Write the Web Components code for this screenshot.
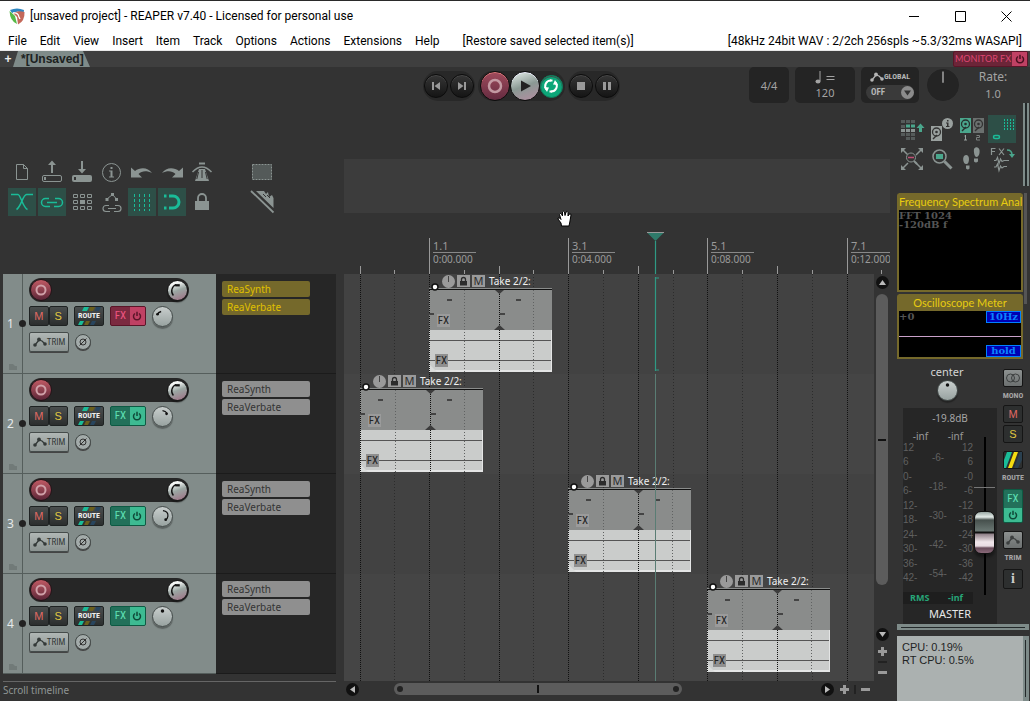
<!DOCTYPE html>
<html lang="en">
<head>
<meta charset="utf-8">
<title>[unsaved project] - REAPER v7.40</title>
<style>
  html, body { margin: 0; min-height: 100vh; background: #333; }
  body { font-family: Roboto, "Noto Sans", sans-serif; font-size: 12px; }
</style>
</head>
<body>
<daw-app></daw-app>
<script>
const BASE = `<style>
  *{box-sizing:border-box}
  :host([hidden]){display:none}
  button,input,select{font:inherit;color:inherit;border:0;padding:0;margin:0;background:none;min-width:0;outline:0}
  button{white-space:nowrap}
  svg{display:block}
</style>`;

function define(name, render) {
  customElements.define(name, class extends HTMLElement {
    connectedCallback() {
      if (this.shadowRoot) return;
      const t = document.createElement('template');
      t.innerHTML = BASE + render(this);
      this.attachShadow({ mode: 'open' }).appendChild(t.content.cloneNode(true));
    }
  });
}

/* ---------- icons, all on a 28 x 28 board ---------- */
const drive = (x, y, c, d) => `<rect x="${x}" y="${y}" width="11" height="15" fill="${c}"/><circle cx="${x + 5.5}" cy="${y + 6}" r="4" fill="none" stroke="${d}" stroke-width="1.3"/><circle cx="${x + 5.5}" cy="${y + 6}" r="1.3" fill="${d}"/><path d="M${x + 2} ${y + 13}L${x + 6} ${y + 9}" stroke="${d}" stroke-width="1.5"/>`;
const ICONS = {
  file: `<path d="M8.500 6.500H15.500L19.500 10.500V21.500H8.500ZM15.500 6.500V10.500H19.500" fill="none" stroke="currentColor"/>`,
  open: `<path d="M13 15V7H10L14 2.500L18 7H15V15Z" fill="currentColor"/><rect x="4.500" y="17.500" width="19" height="6" rx="1.500" fill="none" stroke="currentColor"/><path d="M6 19h2v3H6z" fill="currentColor"/>`,
  save: `<path d="M13 3V11H10L14 15.500L18 11H15V3Z" fill="currentColor"/><rect x="4" y="17" width="20" height="7" rx="2" fill="currentColor"/><path d="M6 19h2v3H6z" fill="#333"/>`,
  info: `<circle cx="13.500" cy="14.500" r="9" fill="none" stroke="currentColor"/><path d="M12.500 9h2v2h-2zM11 12.500h3.500V18.500H16V19.500H11V18.500H12.500V13.500H11z" fill="currentColor"/>`,
  undo: `<path d="M3 9.500L7 13C12 9 20 9 24 15C19 12.500 14 12.500 10.500 16L14 19.500H3Z" fill="currentColor"/>`,
  redo: `<path d="M25 9.500L21 13C16 9 8 9 4 15C9 12.500 14 12.500 17.500 16L14 19.500H25Z" fill="currentColor"/>`,
  metro: `<path d="M11 5.500h6" stroke="currentColor" stroke-width="2"/><path d="M4.500 14Q14 4 23.500 14" fill="none" stroke="currentColor" stroke-width="1.500"/><path d="M11 11H17L21 23H7Z" fill="currentColor"/><path d="M14 12V20M10.500 14L8.800 21M17.500 14L19.200 21" stroke="#333"/>`,
  marquee: `<rect x="4.500" y="6.500" width="19" height="15" fill="#545a59" stroke="currentColor" stroke-dasharray="2 1"/>`,
  cross: `<path d="M3 6.500H10C12.500 6.500 15 20 19.500 21.500M25 6.500H18.500C15 6.500 13 19 8.500 21.500" fill="none" stroke="currentColor" stroke-width="1.500"/>`,
  link: `<path d="M11 10.500H7.500A4 4 0 0 0 7.500 18.500H12M17 10.500H20.500A4 4 0 0 1 20.500 18.500H16M9 14.500H19" fill="none" stroke="currentColor" stroke-width="1.500"/>`,
  matrix: `<path d="M5.500 6.500h4v3h-4zM12.500 6.500h4v3h-4zM19.500 6.500h4v3h-4zM5.500 12.500h4v3h-4zM19.500 12.500h4v3h-4zM5.500 18.500h4v3h-4zM12.500 18.500h4v3h-4zM19.500 18.500h4v3h-4z" fill="none" stroke="currentColor"/><path d="M12 12h5v4h-5z" fill="currentColor"/>`,
  envlink: `<path d="M9 11L14.500 6.500L18.500 11" fill="none" stroke="currentColor"/><path d="M7.500 10h3v3h-3zM13 5h3v3h-3zM17 10h3v3h-3z" fill="currentColor"/><path d="M11 17.500H8A3 3 0 0 0 8 23.500H12M17 17.500H20A3 3 0 0 1 20 23.500H16M10 20.500H18" fill="none" stroke="currentColor" stroke-width="1.200"/>`,
  gridlines: `<path d="M6.500 6V23M11.500 6V23M16.500 6V23M21.500 6V23" stroke="currentColor" stroke-dasharray="3 2"/>`,
  magnet: `<path d="M11 8H15A6 6 0 0 1 15 20H11" fill="none" stroke="currentColor" stroke-width="3"/><path d="M6 6.500h2.500v3H6zM6 18.500h2.500v3H6z" fill="currentColor"/>`,
  lock: `<path d="M7 13H21V22H7Z" fill="currentColor"/><path d="M10 13V10A4 4 0 0 1 18 10V13" fill="none" stroke="currentColor" stroke-width="1.800"/>`,
  ruler: `<path d="M3 3L25.500 24.500" stroke="currentColor" stroke-width="1.800"/><path d="M8 3H16L18 6L20 4L21 9L24 7L25.500 10V20Z" fill="currentColor"/><path d="M15 6L18 9M19 7L22 10" stroke="#333"/>`,
  mixgrid: `<path d="M3 5h4v3H3zM8 5h4v3H8zM13 5h4v3h-4zM3 10h4v3H3zM3 18h4v3H3zM8 18h4v3H8zM13 18h4v3h-4zM8 22h4v3H8zM13 22h4v3h-4z" fill="#555b5a"/><path d="M3 14h4v3H3zM8 14h4v3H8zM13 14h4v3h-4z" fill="currentColor"/><path d="M8 9.500h4v3H8zM13 9.500h4v3h-4zM21 17V13H18.500L22.500 8.500L26.500 13H24V17Z" fill="#4aa68c"/>`,
  driveinfo: `${drive(3, 11, '#9aa19f', '#333')}<circle cx="19.500" cy="8.500" r="5.500" fill="#9aa19f"/><path d="M19 5h1.500v1.500H19zM18 7.500h2.500V11H21.500V12H18V11H19V8.500H18z" fill="#333"/>`,
  drives: `${drive(2, 3, '#4aa68c', '#26302d')}${drive(15, 3, '#6b706f', '#333')}<path d="M7.500 20V25M6 25h3M6.500 21h1" stroke="#9aa19f"/><path d="M18.500 20.500h3v2h-3v2.500h3.500" fill="none" stroke="#7b807f"/>`,
  gridoval: `<path d="M16.500 4V15M19.500 4V15M22.500 4V15M25.500 4V15" stroke="#1abc98" stroke-dasharray="2 1"/><rect x="5.500" y="20.500" width="6" height="3" rx="1.500" fill="none" stroke="#1abc98" stroke-width="1.500"/>`,
  zoomfit: `<path d="M4 4L10 10M24 4L18 10M4 24L10 18M24 24L18 18" stroke="currentColor" stroke-width="1.500"/><path d="M3 3h5L3 8zM25 3h-5l5 5zM3 25h5l-5-5zM25 25h-5l5-5z" fill="currentColor"/><circle cx="13" cy="12.500" r="4.500" fill="#333" stroke="currentColor"/><path d="M16 16l3 3" stroke="currentColor" stroke-width="2"/><path d="M10 12.500h6" stroke="#c05075" stroke-width="1.500"/>`,
  zoomsel: `<circle cx="11.500" cy="11.500" r="6.500" fill="none" stroke="currentColor" stroke-width="1.500"/><path d="M16.500 16.500L23.500 23.500" stroke="currentColor" stroke-width="3"/><rect x="8" y="9" width="7" height="5" fill="#4aa68c"/>`,
  feet: `<path d="M6 11c2-2 5-1 5 3c0 3-1 5-2.500 5C6 20 4 14 6 11zM8 20.500h3.500v3q-1.500 2-3.500 0zM16 4c1.500-3 5-2 5.500 1c.5 4-1 7-3 7s-3-5-2.500-8zM16 13.500h4v3q-2 2-4 0z" fill="currentColor"/>`,
  fxwave: `<path d="M3.500 10V3.500H7.500M3.500 6.500H7M11 3.500L16 10M16 3.500L11 10" fill="none" stroke="currentColor" stroke-width="1.200"/><path d="M19 5Q24 5 24 10" fill="none" stroke="#4aa68c" stroke-width="1.500"/><path d="M21 9h6l-3 4z" fill="#4aa68c"/><path d="M6 15.500H8L9.500 12.500L11 18.500L12.500 14L14 16.500L16 15.500H21M6 22H8L9.500 19L11 25.500L12.500 21L14 23L16 21.500H19" fill="none" stroke="currentColor" stroke-width="1.200"/>`
};
define('daw-icon', el => `
<style>:host{display:block;width:28px;height:28px}</style>
<svg width="28" height="28" viewBox="0 0 28 28" aria-hidden="true">${ICONS[el.getAttribute('name')] || ''}</svg>`);

define('tool-button', el => `
<style>
  :host{display:block;width:28px;height:28px;color:#8b9492}
  :host([on]) button{background:#2d4f47;color:#1abc98}
  button{display:block;width:28px;height:28px}
</style>
<button type="button" aria-label="${el.getAttribute('label')}"><daw-icon name="${el.getAttribute('icon')}"></daw-icon></button>`);

const power = s => `<svg width="${s}" height="${s}" viewBox="0 0 10 10" aria-hidden="true"><path d="M3 2.500A3.500 3.500 0 1 0 7 2.500M5 .8V5" fill="none" stroke="currentColor" stroke-width="1.500"/></svg>`;
const envelope = `<svg width="14" height="10" viewBox="0 0 14 10" aria-hidden="true"><path d="M2 8L6 3L9 4L12 7" fill="none" stroke="currentColor" stroke-width="1.300"/><circle cx="2" cy="8" r="1.800" fill="currentColor"/><circle cx="6" cy="2.500" r="1.900" fill="currentColor"/><circle cx="12" cy="7" r="1.800" fill="currentColor"/></svg>`;

/* ---------- rotary knob: a range input stacked over its face ---------- */
define('daw-knob', el => {
  const kind = el.getAttribute('kind');
  const marks = {
    volume: `<path d="M6 16A7.500 7.500 0 0 1 9 4" fill="none" stroke="#111" stroke-width="1.500"/><path d="M8 3.500h5v2.500H8z" fill="#111"/>`,
    left: `<path d="M4.500 8.500Q6 5.500 9 5" fill="none" stroke="#111" stroke-width="1.800"/><circle cx="5" cy="8" r="1.500" fill="#111"/>`,
    topright: `<path d="M10.500 4Q14 4.500 15.500 7" fill="none" stroke="#111" stroke-width="1.200"/><circle cx="15" cy="7.500" r="1.500" fill="#111"/>`,
    right: `<path d="M11 4Q17 5 16.500 10Q16 13 14 14.500" fill="none" stroke="#111" stroke-width="1.300"/><circle cx="14" cy="14" r="1.500" fill="#111"/>`,
    center: `<circle cx="10.500" cy="4.500" r="1.900" fill="#111"/>`,
    rate: `<path d="M10.500 1V9" stroke="#aaa"/>`
  };
  return `
<style>
  :host{display:grid;width:21px;height:21px;flex:none}
  .face,input{grid-area:1/1;width:100%;height:100%}
  .face{border-radius:50%;background:linear-gradient(#c8cecd,#98a2a0);border:1px solid #444b4a;box-shadow:0 2px 1px rgba(0,0,0,.3)}
  :host([kind=volume]) .face{background:linear-gradient(160deg,#f4f6f5 20%,#9aa6a2 50%,#a06f85);border-color:#161616}
  :host([kind=rate]){width:32px;height:32px}
  :host([kind=rate]) .face{background:#242424;border-color:#242424;box-shadow:none}
  svg{width:100%;height:100%}
  input{appearance:none;opacity:0}
</style>
<div class="face"><svg viewBox="0 0 21 21" aria-hidden="true">${marks[kind]}</svg></div>
<input type="range" aria-label="${el.getAttribute('label')}">`;
});

/* ---------- window title ---------- */
define('title-bar', () => `
<style>
  :host{display:flex;align-items:center;height:31px;background:#fff;color:#000;border-top:1px solid #2a2a2a;padding:0 1px 0 9px}
  .t{margin-left:5px;flex:1;white-space:nowrap}
  button{width:46px;height:30px;display:grid;place-items:center}
</style>
<svg width="16" height="17" viewBox="0 0 16 17" aria-hidden="true"><path d="M1 2Q8-1 15 2L14.500 6L9 3.500L3 5Z" fill="#2e86c1"/><path d="M.5 3Q2 4 6 8L8 16Q1 13 .5 3Z" fill="#57b947"/><path d="M15.500 4Q16 13 9 16.500L8 9L4 5Q9 2 15.500 4Z" fill="#c4685a"/><path d="M4 5Q9 4 10 9L11 11" fill="none" stroke="#fff" stroke-width="1.300"/></svg>
<div class="t">[unsaved project] - REAPER v7.40 - Licensed for personal use</div>
<button type="button" aria-label="Minimize"><svg width="11" height="11"><path d="M0 5.500h10" stroke="#000"/></svg></button>
<button type="button" aria-label="Maximize"><svg width="11" height="11"><path d="M.5.5h10v10H.5z" fill="none" stroke="#000"/></svg></button>
<button type="button" aria-label="Close"><svg width="11" height="11"><path d="M.5.5l10 10M10.500.5l-10 10" stroke="#000"/></svg></button>`);

define('menu-bar', () => `
<style>
  :host{display:flex;align-items:center;height:20px;background:#fff;color:#000;padding:0 8px;border-bottom:1px solid #e8e8e8;white-space:nowrap}
  nav{display:flex;gap:13px;flex:1}
  nav button:last-child{margin-left:10px}
</style>
<nav>${['File', 'Edit', 'View', 'Insert', 'Item', 'Track', 'Options', 'Actions', 'Extensions', 'Help', '[Restore saved selected item(s)]'].map(m => `<button type="button">${m}</button>`).join('')}</nav>
<span>[48kHz 24bit WAV : 2/2ch 256spls ~5.3/32ms WASAPI]</span>`);

define('project-tabs', () => `
<style>
  :host{display:flex;align-items:stretch;height:16px;background:#3f3f3f;padding-left:3px;padding-right:2px}
  .add{width:10px;color:#eee;font:bold 12px/15px "Liberation Sans",sans-serif}
  .tab{width:77px;padding-left:8px;text-align:left;background:#7f8b89;color:#1c2221;font:bold 12px/16px "Liberation Sans",sans-serif;clip-path:polygon(5px 0,70px 0,77px 100%,0 100%)}
  .mon{margin-left:auto;display:flex;border:1px solid #5a1528;border-radius:2px;background:#6c2538}
  .mon button{font:9px/14px Lato,sans-serif;color:#df4672;width:58px}
  .mon .p{background:#c04164;color:#4a1020;width:15px;display:grid;place-items:center}
</style>
<button class="add" type="button" aria-label="New project tab">+</button>
<button class="tab" type="button">*[Unsaved]</button>
<div class="mon"><button type="button">MONITOR FX</button><button type="button" class="p" aria-label="Monitor FX power">${power(10)}</button></div>`);

/* ---------- transport ---------- */
define('transport-bar', () => `
<style>
  :host{display:grid;grid-template-columns:1fr auto 1fr;align-items:center;height:36px;padding-left:12px;color:#a3a3a3}
  .play,.pod,.right{display:flex;align-items:center}
  .play{grid-column:2;gap:3px;padding-top:2px}
  .pod{height:30px;border-radius:15px;background:#282828;padding:0 1px;gap:2px}
  .pod.wide{gap:0;padding:0 2px}
  .pod button{width:24px;height:24px;border-radius:50%;display:grid;place-items:center;color:#999;background:linear-gradient(#363636,#151515);border:1px solid #0c0c0c;box-shadow:inset 0 1px #484848}
  .pod .big{width:30px;height:30px}
  .pod .rec{background:linear-gradient(#a04b5c,#642b40);box-shadow:inset 0 1px #e07d7d;color:#c49aa3}
  .pod .go{background:linear-gradient(160deg,#d6e0dc 10%,#8a9994 50%,#b58ea2);box-shadow:inset 0 1px #eef;color:#222}
  .pod .loop{background:#0ca678;color:#fff;width:23px;height:23px;border-color:#0f7d5c}
  .right{justify-content:flex-end;gap:6px}
  .box{height:36px;border-radius:5px;background:#242424;font:11px/15px "Noto Sans",sans-serif;text-align:center}
  .sig{width:40px}
  .bpm{width:60px;display:grid;justify-items:center;align-content:center;gap:2px}
  input{width:100%;height:14px;text-align:center}
  .glob{width:58px;padding:3px 5px;display:grid;gap:1px;color:#b5b5b5;font:bold 8px/13px "Roboto Condensed",Roboto,sans-serif}
  .glob span{display:flex;align-items:center;justify-content:center}
  .sel{display:grid;align-items:center;background:#3a3a3a;border-radius:8px}
  .sel>*{grid-area:1/1}
  select{appearance:none;width:100%;height:15px;padding-left:5px;font-size:9px}
  .sel svg{justify-self:end;pointer-events:none}
  .rate{width:54px;font:12px/17px "Noto Sans",sans-serif;text-align:center;margin-right:10px}
  .rate input{height:17px;font-size:11px}
  daw-knob{margin:0 1px 0 2px}
</style>
<div class="play">
  <div class="pod">
    <button type="button" aria-label="Go to start"><svg width="10" height="10"><path d="M1 1v8h2V1zM9 1v8L3.500 5z" fill="currentColor"/></svg></button>
    <button type="button" aria-label="Go to end"><svg width="10" height="10"><path d="M9 1v8H7V1zM1 1v8L6.500 5z" fill="currentColor"/></svg></button>
  </div>
  <div class="pod wide">
    <button type="button" class="big rec" aria-label="Record"><svg width="16" height="16"><circle cx="8" cy="8" r="6" fill="none" stroke="currentColor" stroke-width="2.500"/></svg></button>
    <button type="button" class="big go" aria-label="Play"><svg width="14" height="14"><path d="M3 1.500v11L13 7z" fill="currentColor"/></svg></button>
    <button type="button" class="loop" aria-label="Repeat"><svg width="16" height="16"><path d="M8 2.500A5.500 5.500 0 0 0 3.500 11.500M8 13.500A5.500 5.500 0 0 0 12.500 4.500" fill="none" stroke="currentColor" stroke-width="2"/><path d="M1 9l5 .5L4 14zM15 7l-5-.5L12 2z" fill="currentColor"/><path d="M7 2.500h2.500M6.500 13.500H9" stroke="currentColor" stroke-width="2"/></svg></button>
  </div>
  <div class="pod">
    <button type="button" aria-label="Stop"><svg width="8" height="8"><path d="M0 0h8v8H0z" fill="currentColor"/></svg></button>
    <button type="button" aria-label="Pause"><svg width="8" height="8"><path d="M0 0h3v8H0zM5 0h3v8H5z" fill="currentColor"/></svg></button>
  </div>
</div>
<div class="right">
  <button type="button" class="box sig">4/4</button>
  <div class="box bpm"><svg width="20" height="13" aria-hidden="true"><ellipse cx="3" cy="10.500" rx="2.500" ry="2" fill="currentColor"/><path d="M5 0v10M11.500 5.500h8M11.500 8.500h8" stroke="currentColor"/></svg><input type="text" value="120" aria-label="Tempo"></div>
  <div class="box glob"><span>${envelope}GLOBAL</span>
    <div class="sel"><select aria-label="Global automation override"><option>OFF</option></select><svg width="13" height="13"><circle cx="6.500" cy="6.500" r="6.500" fill="#8c8c8c"/><path d="M3 4.500h7l-3.500 5z" fill="#333"/></svg></div></div>
  <daw-knob kind="rate" label="Playback rate"></daw-knob>
  <label class="rate">Rate:<input type="text" value="1.0"></label>
</div>`);

/* ---------- track control panel ---------- */
define('fx-toggle', el => `
<style>
  :host{display:flex;width:36px;height:20px;border:1px solid #0d5a43;border-radius:2px;overflow:hidden;background:#23705a;color:#5fe0b4;font:11px/18px "Roboto Condensed",Roboto,sans-serif}
  button{flex:20 1 0}
  .p{flex:16 1 0;background:#3dbb92;color:#0f4a38;display:grid;place-items:center}
  :host([tone=pink]){border-color:#5a1528;background:#7b2a40;color:#ef5580}
  :host([tone=pink]) .p{background:#c04164;color:#5a1528}
  :host([upright]){flex-direction:column;width:20px;height:34px}
</style>
<button type="button">FX</button><button type="button" class="p" aria-label="FX power">${power(10)}</button>`);

define('track-row', el => {
  const n = el.getAttribute('number'), tone = el.getAttribute('tone') || '';
  return `
<style>
  :host{display:grid;grid-template-columns:213px 1fr;height:100px}
  .tcp{display:grid;grid-template-columns:20px 1fr;background:#828c8a;border-bottom:1px solid #555e5c}
  .side{display:grid;grid-template-rows:1fr auto 1fr;border-right:1px solid #555e5c;color:#e6eaea;font:12px/14px "Noto Sans",sans-serif}
  .num{grid-row:2;display:flex;align-items:center;justify-content:space-between;padding-left:4px;margin-right:-4px}
  .num i{width:7px;height:7px;border-radius:50%;background:#222;position:relative}
  .side svg{grid-row:3;align-self:end;margin:0 0 3px 6px}
  .ctl{display:grid;grid-template-rows:24px 20px 22px;row-gap:4px;padding:4px 0 0 6px;align-content:start}
  .row{display:flex;align-items:center;gap:6px}
  .name{width:160px;height:24px;border-radius:12px;background:#262626;justify-content:space-between;padding:0 1px;gap:0}
  .name input{flex:1;color:#ddd}
  .rec{width:22px;height:22px;border-radius:50%;border:1px solid #241418;background:linear-gradient(#c05a64,#5c2638);color:#cfa0a8;display:grid;place-items:center}
  .b{height:20px;border:1px solid #1e2222;border-radius:2px;background:linear-gradient(#4a4e4e,#2b2e2e);font:11px/18px "Liberation Sans",sans-serif}
  .ms{display:flex;width:39px}
  .ms .b{flex:1}
  .route{width:30px;color:#eee;font:bold 8px/18px "Roboto Condensed",Roboto,sans-serif;display:grid}
  .route svg,.route span{grid-area:1/1}
  .trim{width:40px;height:20px;border:1px solid #454c4b;border-radius:2px;background:linear-gradient(#b0b7b5,#8b9391);color:#333938;display:flex;align-items:center;justify-content:center;box-shadow:0 1px #444;font:9px/18px "Roboto Condensed",Roboto,sans-serif}
  .third{padding-top:2px}
  .ph{width:16px;height:16px;border-radius:50%;border:1px solid #454c4b;background:#a3abaa;display:grid;place-items:center;color:#333;box-shadow:0 1px #444;}
  .ins{background:#262626;border-bottom:1px solid #1b1b1b;padding:7px 26px 0 6px;display:grid;gap:2px;align-content:start}
  .ins button{height:16px;border-radius:2px;background:#8f8f8f;color:#333;text-align:left;padding-left:5px;font:10px/16px "Noto Sans",sans-serif}
  .ins.pink button{background:#75692b;color:#e0c000}
</style>
<div class="tcp">
  <div class="side"><div class="num"><span>${n}</span><i></i></div><svg width="8" height="6" aria-hidden="true"><path d="M0 0h4l2 2h2v4H0z" fill="#717a78"/></svg></div>
  <div class="ctl">
    <div class="row name"><button type="button" class="rec" aria-label="Record arm track ${n}"><svg width="12" height="12"><circle cx="6" cy="6" r="4.500" fill="none" stroke="currentColor" stroke-width="2"/></svg></button><input type="text" aria-label="Track ${n} name"><daw-knob kind="volume" label="Volume"></daw-knob></div>
    <div class="row">
      <div class="ms"><button type="button" class="b" style="color:#e06a64">M</button><button type="button" class="b" style="color:#e0c840">S</button></div>
      <button type="button" class="b route"><svg width="28" height="18" aria-hidden="true"><path d="M9 0h5l-2 4H7zM5 14h4l-2 4H3z" fill="#1abc98"/><path d="M15 0h5l-2 4h-4zM11 14h4l-2 4H9z" fill="#6b5f1c"/><path d="M21 0h5l-2 4h-4zM17 14h4l-2 4h-4z" fill="#28455e"/></svg><span>ROUTE</span></button>
      <fx-toggle tone="${tone}"></fx-toggle>
      <daw-knob kind="${el.getAttribute('pan')}" label="Pan"></daw-knob>
    </div>
    <div class="row third"><button type="button" class="trim">${envelope}TRIM</button><button type="button" class="ph" aria-label="Invert phase"><svg width="10" height="10"><circle cx="5" cy="5" r="3" fill="none" stroke="currentColor"/><path d="M1.500 8.500l7-7" stroke="currentColor"/></svg></button></div>
  </div>
</div>
<div class="ins ${tone}"><button type="button">ReaSynth</button><button type="button">ReaVerbate</button></div>`;
});

define('track-panel', () => `
<style>
  :host{display:flex;flex-direction:column;padding:0 8px 0 3px}
  .tools{display:grid;grid-template-columns:repeat(9,28px);gap:2px;padding:55px 0 0 5px;height:171px;align-content:start}
  .tools .r{grid-column:9}
  .status{margin-top:7px;border-top:1px solid #666;color:#8f9594;font:10px/16px "Noto Sans",sans-serif}
</style>
<div class="tools">
  <tool-button icon="file" label="New project"></tool-button><tool-button icon="open" label="Open project"></tool-button><tool-button icon="save" label="Save project"></tool-button><tool-button icon="info" label="Project settings"></tool-button><tool-button icon="undo" label="Undo"></tool-button><tool-button icon="redo" label="Redo"></tool-button><tool-button icon="metro" label="Metronome"></tool-button><tool-button class="r" icon="marquee" label="Marquee"></tool-button>
  <tool-button on icon="cross" label="Auto crossfade"></tool-button><tool-button on icon="link" label="Item grouping"></tool-button><tool-button icon="matrix" label="Ripple editing"></tool-button><tool-button icon="envlink" label="Move envelopes with items"></tool-button><tool-button on icon="gridlines" label="Grid lines"></tool-button><tool-button on icon="magnet" label="Snap"></tool-button><tool-button icon="lock" label="Lock"></tool-button><tool-button class="r" icon="ruler" label="Ruler"></tool-button>
</div>
<track-row number="1" tone="pink" pan="left"></track-row>
<track-row number="2" pan="topright"></track-row>
<track-row number="3" pan="right"></track-row>
<track-row number="4" pan="center"></track-row>
<div class="status">Scroll timeline</div>`);

/* ---------- arrange view ---------- */
define('media-item', () => `
<style>
  :host{display:block;width:123px;color:#f0f0f0}
  .head{display:flex;gap:2px;height:14px;align-items:center;padding-left:13px;white-space:nowrap;font:10px/14px "Noto Sans",sans-serif}
  .head button{width:13px;height:12px;background:#9a9a9a;color:#2c2c2c;display:grid;place-items:center;flex:none;line-height:12px;font-size:11px}
  .head .k{border-radius:50%;height:13px}
  .head span{margin-left:2px}
  .body{display:grid;height:84px}
  .body>*{grid-area:1/1}
  .fx{align-self:start;justify-self:start;margin:26px 0 0 8px;width:13px;height:13px;background:#9b9b9b;color:#222;font:11px/13px "Roboto Condensed",Roboto,sans-serif}
  .fx.two{margin:66px 0 0 6px;background:#8f8f8f}
  svg{overflow:visible}
</style>
<div class="head"><button type="button" class="k" aria-label="Take volume"><svg width="13" height="13"><path d="M6.500 1v6" stroke="#444"/></svg></button><button type="button" aria-label="Lock item"><svg width="9" height="9"><path d="M1 4h7v4.500H1z" fill="currentColor"/><path d="M2.500 4.500V2.500a2 2 0 0 1 4 0V4.500" fill="none" stroke="currentColor" stroke-width="1.300"/></svg></button><button type="button" aria-label="Mute item">M</button><span>Take 2/2:</span></div>
<div class="body">
<svg width="123" height="84" viewBox="0 0 123 84" aria-hidden="true">
  <path d="M0 0h123v42H0z" fill="#8a8c8b"/><path d="M0 42h123v42H0z" fill="#cacccb"/><path d="M0 82h123v2H0zM122 42h1v42h-1z" fill="#e4e5e5"/><path d="M0 76l8 8H0z" fill="#dadcdb"/>
  <path d="M0 52.500h122M0 72.500h122" stroke="#555"/><path d="M0 1.500h123" stroke="#111"/>
  <path d="M.5 2V84M70.500 2V84" stroke="#111" stroke-dasharray="1 1"/><path d="M35.500 2V84M104.500 2V84" stroke="#606262" stroke-dasharray="1 2"/>
  <path d="M18 11h5v2h-5zM87 11h5v2h-5zM0 25h5v2H0zM71 25h5v2h-5z" fill="#444"/>
  <path d="M66 2h9l-4.500 4zM65 42h11l-5.500-5z" fill="#3c3c3c"/>
  <circle cx="6" cy="-1" r="3" fill="#fff" stroke="#111" stroke-width="1.500"/>
</svg>
<button type="button" class="fx">FX</button><button type="button" class="fx two">FX</button>
</div>`);

define('time-ruler', () => {
  const small = [50, 120, 189, 259, 329, 398, 468, 537], mid = [16, 155, 294, 433];
  return `
<style>
  :host{display:grid;grid-template-columns:85px 139px 139px 140px minmax(0,1fr);height:61px;overflow:hidden;color:#9a9a9a;font:11px/13px "Noto Sans",sans-serif}
  .ticks{grid-area:1/1/2/-1}
  div{grid-row:1;margin-top:25px;border-left:1px solid #999;padding-left:3px;min-width:0}
  div:nth-of-type(1){grid-column:2}div:nth-of-type(2){grid-column:3}div:nth-of-type(3){grid-column:4}div:nth-of-type(4){grid-column:5}
  b{display:block;width:43px;font-weight:400;border-bottom:1px solid #888;padding-top:1px}
  span{display:block;font-size:10px;line-height:12px}
</style>
<svg class="ticks" width="546" height="61" aria-hidden="true"><path d="${small.map(x => `M${x}.500 57v4`).join('')}${mid.map(x => `M${x}.500 53v8`).join('')}" stroke="#999"/></svg>
${[['1.1', '0:00.000'], ['3.1', '0:04.000'], ['5.1', '0:08.000'], ['7.1', '0:12.000']].map(([a, b]) => `<div><b>${a}</b><span>${b}</span></div>`).join('')}`;
});

define('scroll-strip', el => {
  const v = el.hasAttribute('vertical');
  return `
<style>
  :host{display:flex;align-items:center;${v ? 'flex-direction:column;width:16px;padding:2px 0' : 'height:16px;padding:0 18px 0 2px'}}
  button{width:13px;height:13px;border-radius:50%;background:#111;color:#bbb;display:grid;place-items:center;flex:none}
  button.z{background:none;color:#9a9a9a}
  .track{flex:1;display:flex;${v ? 'flex-direction:column;padding:5px 0 43px' : 'padding:0 139px 0 35px'}}
  .bar{flex:1;border-radius:6px;background:#5c5c5c;display:flex;align-items:center;${v ? 'width:12px;justify-content:center' : 'height:12px;justify-content:space-between;padding:0 3px'}}
  .bar i{background:#111;${v ? 'width:8px;height:2px' : 'width:2px;height:8px'}}
  .bar .d{width:6px;height:6px;border-radius:50%;background:#222}
  .sep{background:#222;${v ? 'width:9px;height:2px;margin:3px 0' : 'width:2px;height:9px;margin:0 3px'}}
  .gap{flex:none;width:4px;height:4px}
</style>
<button type="button" aria-label="Scroll back"><svg width="7" height="7"><path d="${v ? 'M0 6h7L3.500 1z' : 'M6 0v7L1 3.500z'}" fill="currentColor"/></svg></button>
<div class="track"><div class="bar" role="scrollbar" aria-orientation="${v ? 'vertical' : 'horizontal'}" aria-valuenow="50">${v ? '<i></i>' : '<span class="d"></span><i></i><span class="d"></span>'}</div></div>
<button type="button" aria-label="Scroll forward"><svg width="7" height="7"><path d="${v ? 'M0 1h7L3.500 6z' : 'M1 0v7L6 3.500z'}" fill="currentColor"/></svg></button>
<span class="gap"></span>
<button type="button" class="z" aria-label="Zoom in"><svg width="9" height="9"><path d="M0 4.500h9M4.500 0v9" stroke="currentColor" stroke-width="3"/></svg></button>
<span class="sep"></span>
<button type="button" class="z" aria-label="Zoom out"><svg width="9" height="9"><path d="M0 4.500h9" stroke="currentColor" stroke-width="3"/></svg></button>`;
});

define('arrange-view', () => {
  const strong = [16, 85, 155, 224, 294, 363, 433, 503], weak = [50, 120, 189, 259, 329, 398, 468];
  const dots = (xs, y) => xs.map(x => `M${x}.500 0V${y}`).join('');
  return `
<style>
  :host{display:flex;flex-direction:column;min-width:0;position:relative;margin-right:7px}
  .regions{height:54px;margin-top:56px;background:#3c3c3c}
  .mid{display:grid;grid-template-columns:minmax(0,1fr) 16px;height:407px}
  .lanes{display:grid;grid-template:100px 100px 100px 107px / minmax(0,1fr);overflow:hidden;background:#424242}
  .lanes>*{grid-column:1}
  .lane:nth-of-type(even){background:#454545}
  .grid{grid-row:1/-1}
  .l1{grid-row:1}.l2{grid-row:2}.l3{grid-row:3}.l4{grid-row:4}
  media-item.l1{margin-left:85px}
  media-item.l2{margin-left:16px}
  media-item.l3{margin-left:224px}
  media-item.l4{margin-left:363px}
  .cursor{position:absolute;left:303px;top:129px;pointer-events:none}
  .hand{position:absolute;left:213px;top:107px;pointer-events:none}
</style>
<div class="regions"></div>
<time-ruler></time-ruler>
<div class="mid">
  <div class="lanes">
    <div class="lane l1"></div><div class="lane l2"></div><div class="lane l3"></div><div class="lane l4"></div>
    <svg class="grid" width="530" height="407" aria-hidden="true"><path d="${dots(strong, 407)}" stroke="#111" stroke-dasharray="1 1"/><path d="${dots(weak, 407)}" stroke="#2c2c2c" stroke-dasharray="1 2"/></svg>
    <media-item class="l1"></media-item><media-item class="l2"></media-item><media-item class="l3"></media-item><media-item class="l4"></media-item>
  </div>
  <scroll-strip vertical></scroll-strip>
</div>
<scroll-strip></scroll-strip>
<svg class="cursor" width="18" height="450" aria-hidden="true"><path d="M0 .5H17L8.500 9z" fill="#2f7a6a"/><path d="M0 .5h17" stroke="#999"/><path d="M8.500 9V42M8.500 45v94M8 46h4M8 138h4" stroke="#2f9a84" stroke-width="1.200" fill="none"/><path d="M8.500 142V449" stroke="#5a7d74"/></svg>
<svg class="hand" width="16" height="17" viewBox="0 0 16 17" aria-hidden="true"><path d="M4.500 16L4 13L1 9Q.5 7.500 2.500 8L4 9.500L2.500 4.500Q3 2.500 4.500 4L5.500 6L5.500 2Q6.500 .5 7.500 2L8 5.500L9 2Q10.500 .8 11 2.500L11 6L12.500 4Q14 3.500 14 5L13 11L12 16Z" fill="#fff" stroke="#000"/></svg>`;
});

/* ---------- right dock ---------- */
define('meter-window', () => `
<style>
  :host{display:flex;flex-direction:column;min-width:0;border:2px solid #75692b;border-top:0;border-radius:3px 3px 0 0;background:#000}
  header{height:17px;background:#75692b;color:#e8cc10;font:11px/17px Lato,sans-serif;text-align:center;white-space:nowrap}
</style><header><slot name="title"></slot></header><slot></slot>`);

define('master-strip', () => {
  const left = ['12', '6', '0-', '6-', '12-', '18-', '24-', '30-', '36-', '42-'];
  const right = ['12', '6', '-0', '-6', '-12', '-18', '-24', '-30', '-36', '-42'];
  const mid = ['-6-', '-18-', '-30-', '-42-', '-54-'];
  const col = (c, a) => `<div class="${c}">${a.map(t => `<span>${t}</span>`).join('')}</div>`;
  return `
<style>
  :host{display:grid;grid-template-columns:94px 20px;justify-content:space-between;padding:0 7px 0 6px;height:263px;color:#a5a5a5}
  .main{display:flex;flex-direction:column;align-items:center}
  .lab{margin:4px 6px 0 0;height:14px;color:#d5d5d5;font:11px/14px "Noto Sans",sans-serif}
  .main>daw-knob{margin:1px 6px 7px 0}
  .panel{flex:1;width:94px;background:#262626;display:grid;grid-template-columns:70px 23px;grid-template-rows:18px 16px 142px 1fr 16px;justify-content:space-between;font:10px/14px "Noto Sans",sans-serif}
  .db{grid-column:1/-1;text-align:center;padding-top:3px}
  .inf{display:flex;justify-content:space-around;padding-top:3px;color:#999}
  .scale{display:grid;grid-template-columns:1fr 1fr 1fr;color:#606060;font:10px/12px "Liberation Sans",sans-serif}
  .scale div{display:flex;flex-direction:column;justify-content:space-between}
  .scale .m{margin:10px 0 4px;text-align:center}.scale .r{text-align:right;margin-top:0}
  .rms{align-self:end;margin-bottom:4px;grid-column:1;grid-row:4;height:12px;display:flex;justify-content:space-between;padding:0 10px 0 7px;background:#1e1e1e;color:#27a578;font:bold 9px/12px "Noto Sans",sans-serif}
  .name{grid-column:1/-1;grid-row:5;text-align:center;color:#e8e8e8;font:11px/12px "Noto Sans",sans-serif}
  .fader{grid-column:2;grid-row:2/5;margin-top:11px;width:21px;height:158px;appearance:none;writing-mode:vertical-lr;direction:rtl;background:linear-gradient(#777,#777) 0 50px/21px 1px no-repeat,linear-gradient(#000,#000) 10px 0/2px 100% no-repeat}
  .fader::-webkit-slider-thumb{appearance:none;width:21px;height:43px;border-radius:7px;border:1px solid #111;background:linear-gradient(#9aa8a4 0,#e4ece9 5px,#46504d 8px,#6a7773 19px,#111 20px,#111 21px,#8f8088 22px,#f0e6ea 30px,#e8dce2 34px,#684c5a 36px,#8a6a7a 41px);box-shadow:0 3px 3px rgba(0,0,0,.4)}
  .side{display:flex;flex-direction:column;align-items:center;padding-top:8px;font:bold 8px/10px "Roboto Condensed",Roboto,sans-serif;gap:4px}
  .grp{display:flex;flex-direction:column;align-items:center;gap:2px}
  .side button{width:20px;height:18px;border:1px solid #151515;border-radius:2px;background:#2d2f2f;display:grid;place-items:center;font:bold 11px/16px "Liberation Sans",sans-serif}
  .side .light{background:linear-gradient(#8d9190,#6c7070);color:#3c3f3f}
  .side .ms{font-weight:400}
  .side span{height:10px}
  fx-toggle{margin:2px 0 4px}
  .route{margin-top:4px}
  .side .last{height:20px;margin-top:2px;color:#ccc;font:bold 14px/16px "Liberation Serif",serif}
</style>
<div class="main">
  <div class="lab">center</div>
  <daw-knob kind="center" label="Master pan"></daw-knob>
  <div class="panel">
    <div class="db">-19.8dB</div>
    <div class="inf"><span>-inf</span><span>-inf</span></div>
    <div class="scale">${col('l', left)}${col('m', mid)}${col('r', right)}</div>
    <div class="rms"><span>RMS</span><span>-inf</span></div>
    <input class="fader" type="range" min="0" max="100" value="36" aria-label="Master volume">
    <div class="name">MASTER</div>
  </div>
</div>
<div class="side">
  <button type="button" class="light" aria-label="Mono"><svg width="16" height="12"><circle cx="5.500" cy="6" r="4" fill="none" stroke="currentColor"/><circle cx="10.500" cy="6" r="4" fill="none" stroke="currentColor"/></svg></button><span>MONO</span>
  <div class="grp"><button type="button" class="ms" style="color:#e06a64">M</button><button type="button" class="ms" style="color:#e0c840">S</button></div>
  <button type="button" class="route" aria-label="Route"><svg width="18" height="16"><path d="M3 0h5L2 16H0V8z" fill="#1abc98"/><path d="M10 0h4L8 16H4z" fill="#f4dc10"/><path d="M16 0h2v8l-4 8h-4z" fill="#2a4050"/></svg></button><span>ROUTE</span>
  <fx-toggle upright></fx-toggle>
  <button type="button" class="light" aria-label="Trim">${envelope}</button><span>TRIM</span>
  <button type="button" class="last">i</button>
</div>`;
});

define('right-dock', () => `
<style>
  :host{display:flex;flex-direction:column;min-width:0}
  .top{display:flex;height:83px;justify-content:space-between;padding-right:1px}
  .tools{display:grid;grid-template-columns:repeat(4,28px);gap:2px;padding:12px 0 0 1px;align-content:start}
  .bar{width:6px;border:solid #7e8b89;border-width:0 2px;background:#23292a}
  .fx{display:grid;grid-template-columns:minmax(0,1fr) 3px;column-gap:1px;padding-right:3px;margin-top:7px;height:168px}
  .wins{display:grid;grid-template:99px 65px / minmax(0,1fr);gap:2px}
  .rail{width:3px;height:111px;background:#555}
  .mono{font:bold 10px/9px "DejaVu Serif",serif;color:#555}
  .mono p{margin:0}
  .mono.a{padding-top:1px}
  .scope{display:grid;flex:1;grid-template-columns:1fr auto;align-content:space-between;background:linear-gradient(#c9a0c9,#c9a0c9) 0 25px/100% 1px no-repeat}
  .scope b{grid-column:2;width:35px;height:12px;border:1px solid #0080ff;background:#0000b4;color:#0a84ff;font:bold 10px/10px "DejaVu Serif",serif;text-align:center}
  .scope .z{grid-area:1/1;line-height:11px}
  .split{height:6px;background:linear-gradient(#23292a,#23292a) 4px 3px/calc(100% - 8px) 1px no-repeat #7e8b89;margin-right:1px}
  .cpu{margin:6px 1px 0 0;background:linear-gradient(#23292a,#23292a) right 3px top 4px/1px calc(100% - 8px) no-repeat,linear-gradient(#7e8b89,#7e8b89) right/6px 100% no-repeat #abb1b0;color:#1f2424;font:11px/13px "Liberation Sans",sans-serif;padding:5px;flex:1}
</style>
<div class="top"><div class="tools">
  <tool-button icon="mixgrid" label="Track layout"></tool-button><tool-button icon="driveinfo" label="Media info"></tool-button><tool-button icon="drives" label="Screensets"></tool-button><tool-button on icon="gridoval" label="Snap to grid"></tool-button>
  <tool-button icon="zoomfit" label="Zoom out to project"></tool-button><tool-button icon="zoomsel" label="Zoom to selection"></tool-button><tool-button icon="feet" label="Step"></tool-button><tool-button icon="fxwave" label="FX to items"></tool-button>
</div><div class="bar"></div></div>
<div class="fx"><div class="wins">
  <meter-window><span slot="title">Frequency Spectrum Anal</span><div class="mono a"><p>FFT 1024</p><p>-120dB f</p></div></meter-window>
  <meter-window><span slot="title">Oscilloscope Meter</span><div class="scope"><span class="mono z">+0</span><b>10Hz</b><b>hold</b></div></meter-window>
</div><div class="rail"></div></div>
<master-strip></master-strip>
<div class="split"></div>
<div class="cpu">CPU: 0.19%<br>RT CPU: 0.5%</div>`);

define('daw-app', () => `
<style>
  :host{display:flex;flex-direction:column;min-height:100vh;background:#333}
  main{flex:1;display:grid;grid-template-columns:344px minmax(0,1fr) 133px}
</style>
<title-bar></title-bar><menu-bar></menu-bar><project-tabs></project-tabs>
<transport-bar></transport-bar>
<main><track-panel></track-panel><arrange-view></arrange-view><right-dock></right-dock></main>`);
</script>
</body>
</html>
